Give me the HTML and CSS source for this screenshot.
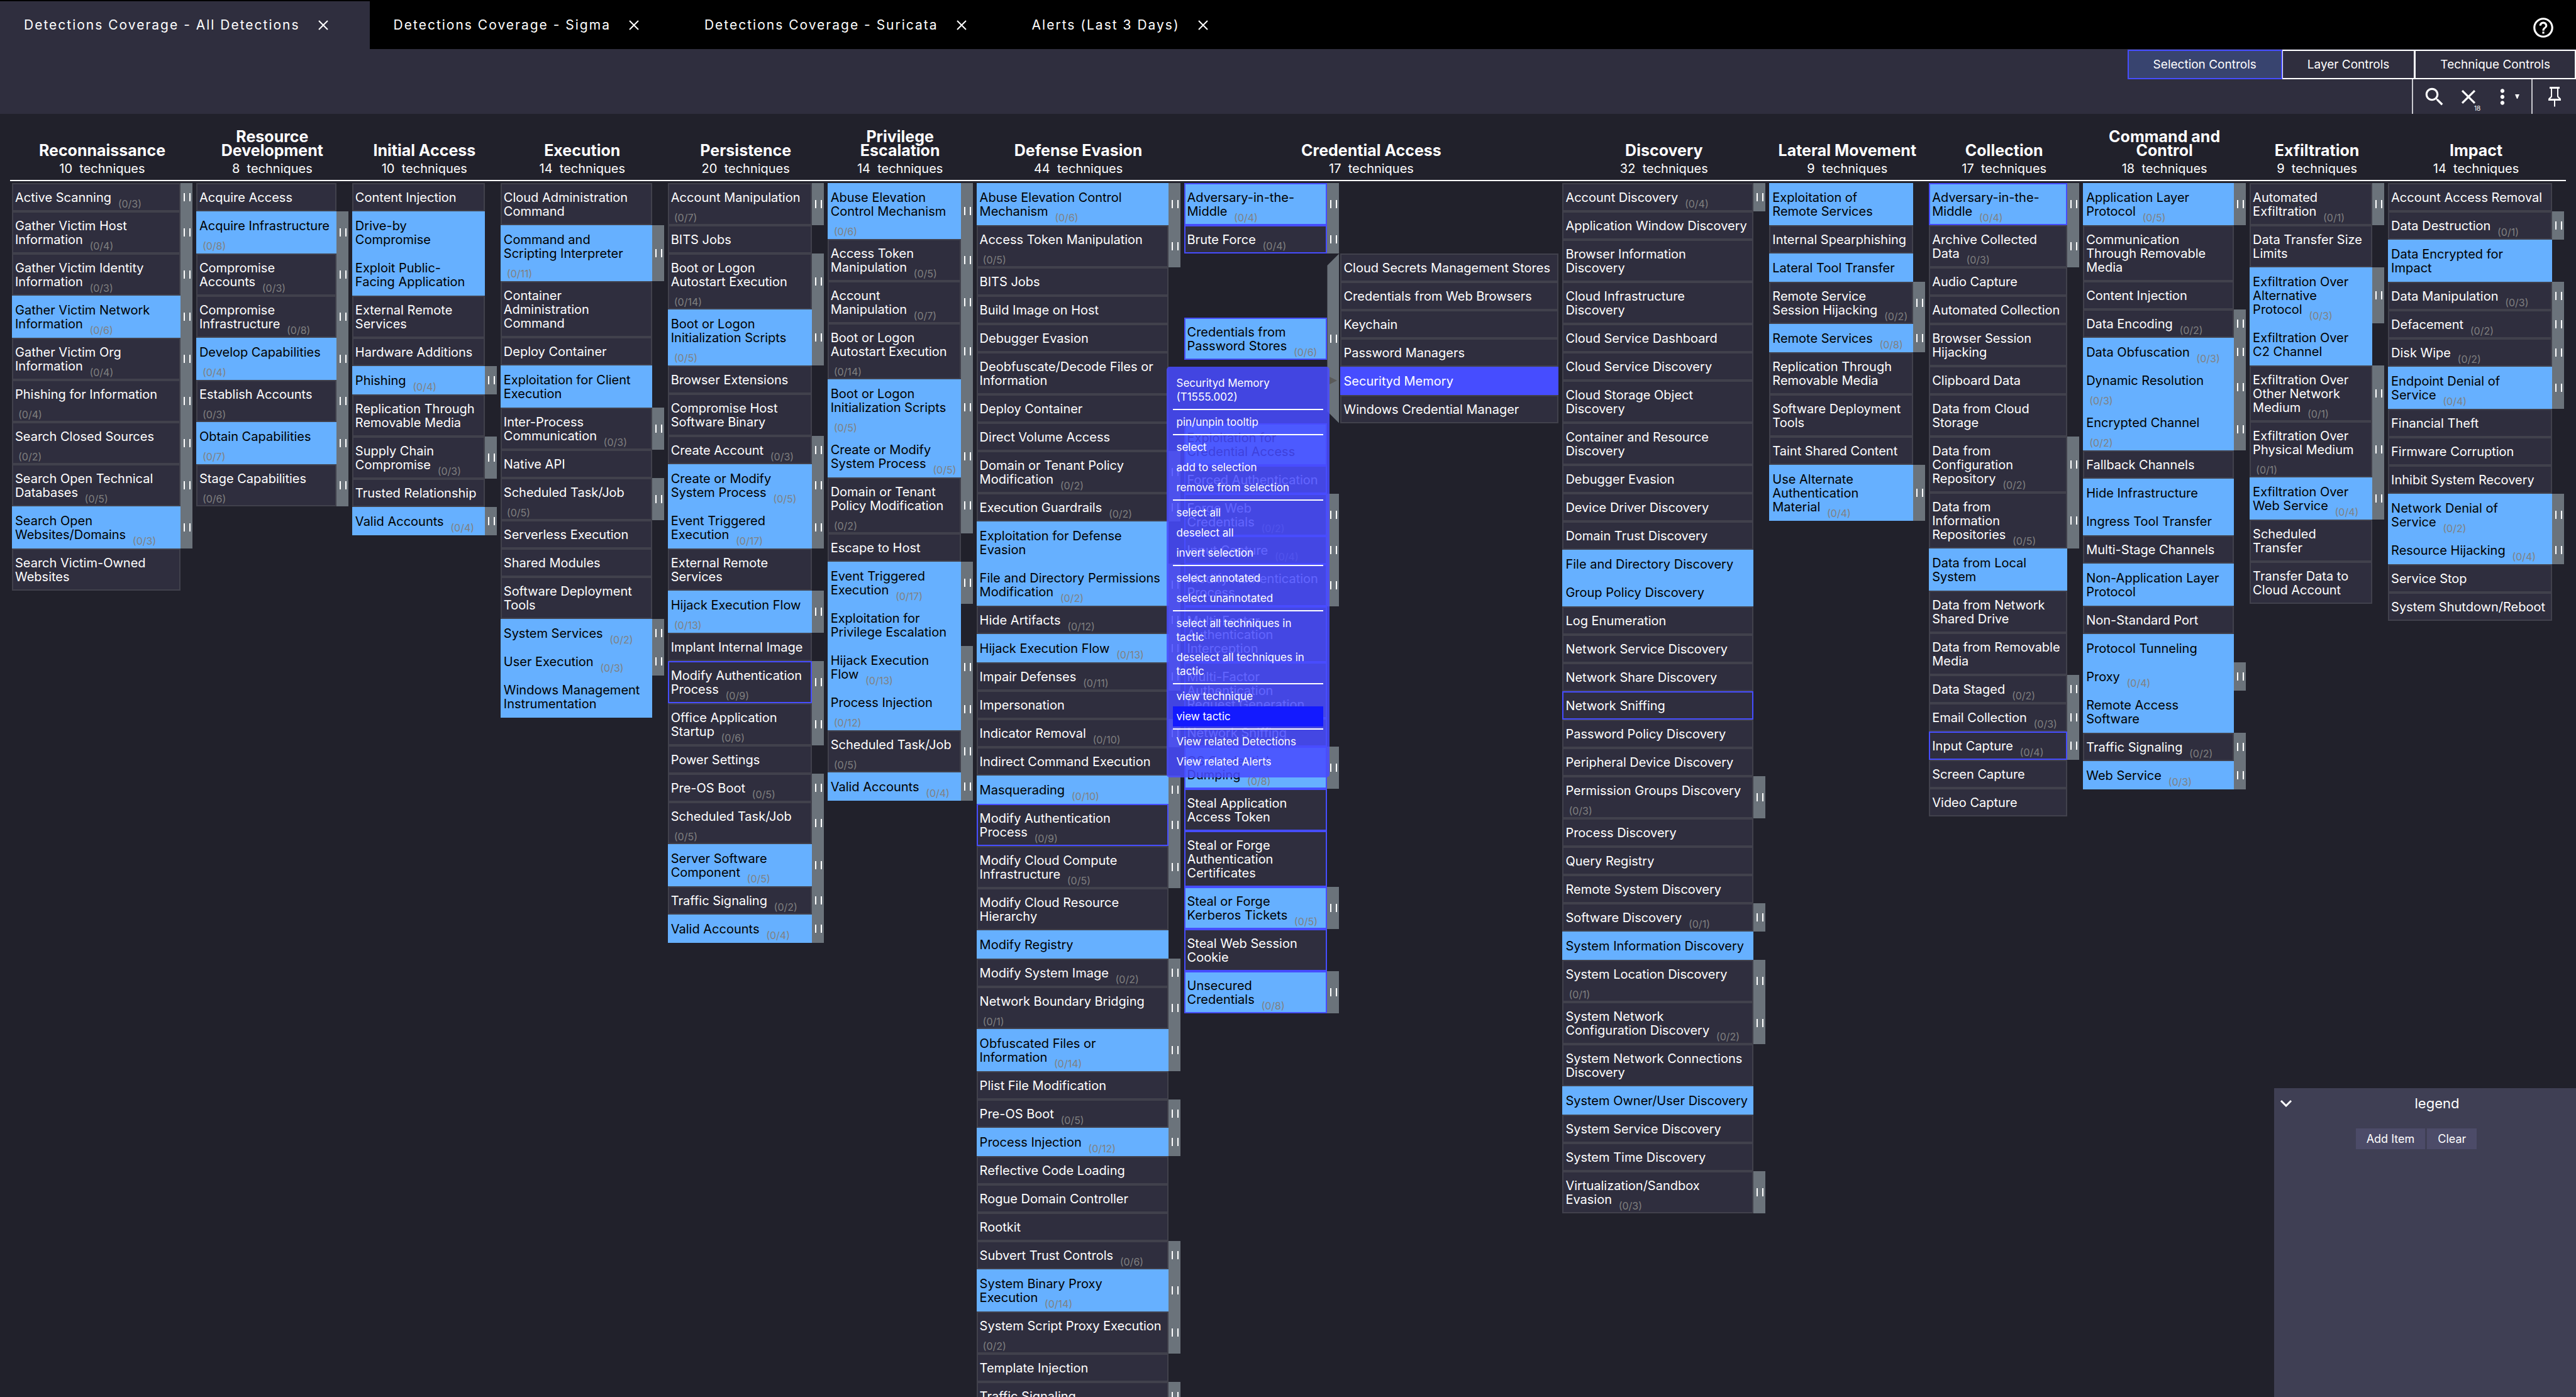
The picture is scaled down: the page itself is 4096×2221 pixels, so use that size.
FILE: index.html
```html
<!DOCTYPE html>
<html lang="en">
<head>
<meta charset="utf-8">
<title>Detections Coverage</title>
<link rel="stylesheet" href="styles.css">
</head>
<body>
<nav class="tabs">
  <div class="tab tab-active"><button class="tab-name">Detections Coverage - All Detections</button><button class="tab-close" aria-label="Close"><svg viewBox="0 0 16 16"><path d="M1 1l14 14M15 1L1 15"/></svg></button></div>
  <div class="tab"><button class="tab-name">Detections Coverage - Sigma</button><button class="tab-close" aria-label="Close"><svg viewBox="0 0 16 16"><path d="M1 1l14 14M15 1L1 15"/></svg></button></div>
  <div class="tab"><button class="tab-name">Detections Coverage - Suricata</button><button class="tab-close" aria-label="Close"><svg viewBox="0 0 16 16"><path d="M1 1l14 14M15 1L1 15"/></svg></button></div>
  <div class="tab"><button class="tab-name">Alerts (Last 3 Days)</button><button class="tab-close" aria-label="Close"><svg viewBox="0 0 16 16"><path d="M1 1l14 14M15 1L1 15"/></svg></button></div>
  <button class="help" aria-label="Help"><svg class="icon" viewBox="0 0 24 24"><path d="M11 18h2v-2h-2v2zm1-16C6.480 2 2 6.480 2 12s4.480 10 10 10 10-4.480 10-10S17.520 2 12 2zm0 18c-4.410 0-8-3.590-8-8s3.590-8 8-8 8 3.590 8 8-3.590 8-8 8zm0-14c-2.210 0-4 1.790-4 4h2c0-1.100.9-2 2-2s2 .9 2 2c0 2-3 1.750-3 5h2c0-2.250 3-2.500 3-5 0-2.210-1.790-4-4-4z"/></svg></button>
</nav>
<header class="controls">
  <div class="modes">
    <button class="mode mode-on">Selection Controls</button><button class="mode">Layer Controls</button><button class="mode">Technique Controls</button>
  </div>
  <div class="tools">
    <div class="tool-group tool-main">
      <button class="tool" aria-label="Search"><svg class="icon" viewBox="0 0 24 24"><path d="M15.500 14h-.79l-.28-.27C15.410 12.590 16 11.110 16 9.500 16 5.910 13.090 3 9.500 3S3 5.910 3 9.500 5.910 16 9.500 16c1.610 0 3.090-.59 4.230-1.570l.27.28v.79l5 4.990L20.490 19l-4.990-5zm-6 0C7.010 14 5 11.990 5 9.500S7.010 5 9.500 5 14 7.010 14 9.500 11.990 14 9.500 14z"/></svg></button>
      <button class="tool" aria-label="Deselect"><svg class="icon" viewBox="0 0 24 24"><path d="M19 6.410L17.590 5 12 10.590 6.410 5 5 6.410 10.590 12 5 17.590 6.410 19 12 13.410 17.590 19 19 17.590 13.410 12z"/></svg><span class="tool-count">18</span></button>
      <button class="tool tool-more" aria-label="More"><svg class="icon" viewBox="0 0 24 24"><path d="M12 8c1.100 0 2-.9 2-2s-.9-2-2-2-2 .9-2 2 .9 2 2 2zm0 2c-1.100 0-2 .9-2 2s.9 2 2 2 2-.9 2-2-.9-2-2-2zm0 6c-1.100 0-2 .9-2 2s.9 2 2 2 2-.9 2-2-.9-2-2-2z"/></svg><svg class="caret" viewBox="0 0 7 7"><path d="M0 0h7L4 7H3z"/></svg></button>
    </div>
    <div class="tool-group">
      <button class="tool tool-pin" aria-label="Pin"><svg class="pin" viewBox="0 0 20 32"><path fill-rule="evenodd" d="M2 0h16v3h-2v12l4 4v3h-9v9l-1 1-1-1v-9H0v-3l4-4V3H2zM6 3v13l-3 3h14l-3-3V3z"/></svg></button>
    </div>
  </div>
</header>
<main class="matrix">
<section class="tactic">
  <header><h2>Reconnaissance</h2><p>10&nbsp; techniques</p></header>
  <ul>
    <li><p>Active Scanning <sub>(0/3)</sub></p><button></button></li>
    <li><p>Gather Victim Host Information <sub>(0/4)</sub></p><button></button></li>
    <li><p>Gather Victim Identity Information <sub>(0/3)</sub></p><button></button></li>
    <li class="hit"><p>Gather Victim Network Information <sub>(0/6)</sub></p><button></button></li>
    <li><p>Gather Victim Org<br>Information <sub>(0/4)</sub></p><button></button></li>
    <li><p>Phishing for Information <sub>(0/4)</sub></p><button></button></li>
    <li><p>Search Closed Sources <br><sub>(0/2)</sub></p><button></button></li>
    <li><p>Search Open Technical Databases <sub>(0/5)</sub></p><button></button></li>
    <li class="hit"><p>Search Open<br>Websites/Domains <sub>(0/3)</sub></p><button></button></li>
    <li><p>Search Victim-Owned<br>Websites</p></li>
  </ul>
</section>
<section class="tactic">
  <header><h2>Resource Development</h2><p>8&nbsp; techniques</p></header>
  <ul>
    <li><p>Acquire Access</p></li>
    <li class="hit"><p>Acquire Infrastructure <sub>(0/8)</sub></p><button></button></li>
    <li><p>Compromise<br>Accounts <sub>(0/3)</sub></p><button></button></li>
    <li><p>Compromise Infrastructure <sub>(0/8)</sub></p><button></button></li>
    <li class="hit"><p>Develop Capabilities <br><sub>(0/4)</sub></p><button></button></li>
    <li><p>Establish Accounts <br><sub>(0/3)</sub></p><button></button></li>
    <li class="hit"><p>Obtain Capabilities <br><sub>(0/7)</sub></p><button></button></li>
    <li><p>Stage Capabilities <br><sub>(0/6)</sub></p><button></button></li>
  </ul>
</section>
<section class="tactic">
  <header><h2>Initial Access</h2><p>10&nbsp; techniques</p></header>
  <ul>
    <li><p>Content Injection</p></li>
    <li class="hit"><p>Drive-by<br>Compromise</p></li>
    <li class="hit"><p>Exploit Public-<br>Facing Application</p></li>
    <li><p>External Remote Services</p></li>
    <li><p>Hardware Additions</p></li>
    <li class="hit"><p>Phishing <sub>(0/4)</sub></p><button></button></li>
    <li><p>Replication Through Removable Media</p></li>
    <li><p>Supply Chain Compromise <sub>(0/3)</sub></p><button></button></li>
    <li><p>Trusted Relationship</p></li>
    <li class="hit"><p>Valid Accounts <sub>(0/4)</sub></p><button></button></li>
  </ul>
</section>
<section class="tactic">
  <header><h2>Execution</h2><p>14&nbsp; techniques</p></header>
  <ul>
    <li><p>Cloud Administration Command</p></li>
    <li class="hit"><p>Command and<br>Scripting Interpreter <sub>(0/11)</sub></p><button></button></li>
    <li><p>Container<br>Administration<br>Command</p></li>
    <li><p>Deploy Container</p></li>
    <li class="hit"><p>Exploitation for Client Execution</p></li>
    <li><p>Inter-Process<br>Communication <sub>(0/3)</sub></p><button></button></li>
    <li><p>Native API</p></li>
    <li><p>Scheduled Task/Job <br><sub>(0/5)</sub></p><button></button></li>
    <li><p>Serverless Execution</p></li>
    <li><p>Shared Modules</p></li>
    <li><p>Software Deployment Tools</p></li>
    <li class="hit"><p>System Services <sub>(0/2)</sub></p><button></button></li>
    <li class="hit"><p>User Execution <sub>(0/3)</sub></p><button></button></li>
    <li class="hit"><p>Windows Management Instrumentation</p></li>
  </ul>
</section>
<section class="tactic">
  <header><h2>Persistence</h2><p>20&nbsp; techniques</p></header>
  <ul>
    <li><p>Account Manipulation <sub>(0/7)</sub></p><button></button></li>
    <li><p>BITS Jobs</p></li>
    <li><p>Boot or Logon<br>Autostart Execution <sub>(0/14)</sub></p><button></button></li>
    <li class="hit"><p>Boot or Logon<br>Initialization Scripts <sub>(0/5)</sub></p><button></button></li>
    <li><p>Browser Extensions</p></li>
    <li><p>Compromise Host Software Binary</p></li>
    <li><p>Create Account <sub>(0/3)</sub></p><button></button></li>
    <li class="hit"><p>Create or Modify System Process <sub>(0/5)</sub></p><button></button></li>
    <li class="hit"><p>Event Triggered Execution <sub>(0/17)</sub></p><button></button></li>
    <li><p>External Remote Services</p></li>
    <li class="hit"><p>Hijack Execution Flow <sub>(0/13)</sub></p><button></button></li>
    <li><p>Implant Internal Image</p></li>
    <li class="linked"><p>Modify Authentication Process <sub>(0/9)</sub></p><button></button></li>
    <li><p>Office Application Startup <sub>(0/6)</sub></p><button></button></li>
    <li><p>Power Settings</p></li>
    <li><p>Pre-OS Boot <sub>(0/5)</sub></p><button></button></li>
    <li><p>Scheduled Task/Job <br><sub>(0/5)</sub></p><button></button></li>
    <li class="hit"><p>Server Software Component <sub>(0/5)</sub></p><button></button></li>
    <li><p>Traffic Signaling <sub>(0/2)</sub></p><button></button></li>
    <li class="hit"><p>Valid Accounts <sub>(0/4)</sub></p><button></button></li>
  </ul>
</section>
<section class="tactic">
  <header><h2>Privilege<br>Escalation</h2><p>14&nbsp; techniques</p></header>
  <ul>
    <li class="hit"><p>Abuse Elevation Control Mechanism <sub>(0/6)</sub></p><button></button></li>
    <li><p>Access Token Manipulation <sub>(0/5)</sub></p><button></button></li>
    <li><p>Account<br>Manipulation <sub>(0/7)</sub></p><button></button></li>
    <li><p>Boot or Logon<br>Autostart Execution <sub>(0/14)</sub></p><button></button></li>
    <li class="hit"><p>Boot or Logon<br>Initialization Scripts <sub>(0/5)</sub></p><button></button></li>
    <li class="hit"><p>Create or Modify System Process <sub>(0/5)</sub></p><button></button></li>
    <li><p>Domain or Tenant Policy Modification <sub>(0/2)</sub></p><button></button></li>
    <li><p>Escape to Host</p></li>
    <li class="hit"><p>Event Triggered Execution <sub>(0/17)</sub></p><button></button></li>
    <li class="hit"><p>Exploitation for Privilege Escalation</p></li>
    <li class="hit"><p>Hijack Execution<br>Flow <sub>(0/13)</sub></p><button></button></li>
    <li class="hit"><p>Process Injection <br><sub>(0/12)</sub></p><button></button></li>
    <li><p>Scheduled Task/Job <sub>(0/5)</sub></p><button></button></li>
    <li class="hit"><p>Valid Accounts <sub>(0/4)</sub></p><button></button></li>
  </ul>
</section>
<section class="tactic">
  <header><h2>Defense Evasion</h2><p>44&nbsp; techniques</p></header>
  <ul>
    <li class="hit"><p>Abuse Elevation Control Mechanism <sub>(0/6)</sub></p><button></button></li>
    <li><p>Access Token Manipulation <br><sub>(0/5)</sub></p><button></button></li>
    <li><p>BITS Jobs</p></li>
    <li><p>Build Image on Host</p></li>
    <li><p>Debugger Evasion</p></li>
    <li><p>Deobfuscate/Decode Files or Information</p></li>
    <li><p>Deploy Container</p></li>
    <li><p>Direct Volume Access</p></li>
    <li><p>Domain or Tenant Policy Modification <sub>(0/2)</sub></p><button></button></li>
    <li><p>Execution Guardrails <sub>(0/2)</sub></p><button></button></li>
    <li class="hit"><p>Exploitation for Defense<br>Evasion</p></li>
    <li class="hit"><p>File and Directory Permissions Modification <sub>(0/2)</sub></p><button></button></li>
    <li><p>Hide Artifacts <sub>(0/12)</sub></p><button></button></li>
    <li class="hit"><p>Hijack Execution Flow <sub>(0/13)</sub></p><button></button></li>
    <li><p>Impair Defenses <sub>(0/11)</sub></p><button></button></li>
    <li><p>Impersonation</p></li>
    <li><p>Indicator Removal <sub>(0/10)</sub></p><button></button></li>
    <li><p>Indirect Command Execution</p></li>
    <li class="hit"><p>Masquerading <sub>(0/10)</sub></p><button></button></li>
    <li class="linked"><p>Modify Authentication<br>Process <sub>(0/9)</sub></p><button></button></li>
    <li><p>Modify Cloud Compute Infrastructure <sub>(0/5)</sub></p><button></button></li>
    <li><p>Modify Cloud Resource Hierarchy</p></li>
    <li class="hit"><p>Modify Registry</p></li>
    <li><p>Modify System Image <sub>(0/2)</sub></p><button></button></li>
    <li><p>Network Boundary Bridging <br><sub>(0/1)</sub></p><button></button></li>
    <li class="hit"><p>Obfuscated Files or<br>Information <sub>(0/14)</sub></p><button></button></li>
    <li><p>Plist File Modification</p></li>
    <li><p>Pre-OS Boot <sub>(0/5)</sub></p><button></button></li>
    <li class="hit"><p>Process Injection <sub>(0/12)</sub></p><button></button></li>
    <li><p>Reflective Code Loading</p></li>
    <li><p>Rogue Domain Controller</p></li>
    <li><p>Rootkit</p></li>
    <li><p>Subvert Trust Controls <sub>(0/6)</sub></p><button></button></li>
    <li class="hit"><p>System Binary Proxy<br>Execution <sub>(0/14)</sub></p><button></button></li>
    <li><p>System Script Proxy Execution <sub>(0/2)</sub></p><button></button></li>
    <li><p>Template Injection</p></li>
    <li><p>Traffic Signaling <sub>(0/2)</sub></p><button></button></li>
  </ul>
</section>
<section class="tactic tactic-open">
  <header><h2>Credential Access</h2><p>17&nbsp; techniques</p></header>
  <ul>
    <li class="hit linked"><p>Adversary-in-the-Middle <sub>(0/4)</sub></p><button></button></li>
    <li class="linked"><p>Brute Force <sub>(0/4)</sub></p><button></button></li>
    <li class="hit linked expanded"><p>Credentials from Password Stores <sub>(0/6)</sub></p><button></button>
      <ol class="subs">
        <li><p>Cloud Secrets Management Stores</p></li>
        <li><p>Credentials from Web Browsers</p></li>
        <li><p>Keychain</p></li>
        <li><p>Password Managers</p></li>
        <li class="selected"><p>Securityd Memory</p>
          <div class="menu">
            <h3>Securityd Memory (T1555.002)</h3>
            <hr>
            <button>pin/unpin tooltip</button>
            <hr>
            <button>select</button>
            <button>add to selection</button>
            <button>remove from selection</button>
            <hr>
            <button>select all</button>
            <button>deselect all</button>
            <button>invert selection</button>
            <hr>
            <button>select annotated</button>
            <button>select unannotated</button>
            <hr>
            <button>select all techniques in tactic</button>
            <button>deselect all techniques in tactic</button>
            <hr>
            <button>view technique</button>
            <button class="hover">view tactic</button>
            <hr>
            <button>View related Detections</button>
            <button>View related Alerts</button>
          </div>
        </li>
        <li><p>Windows Credential Manager</p></li>
      </ol>
    </li>
    <li class="hit linked"><p>Exploitation for Credential Access</p></li>
    <li class="linked"><p>Forced Authentication</p></li>
    <li class="linked"><p>Forge Web<br>Credentials <sub>(0/2)</sub></p><button></button></li>
    <li class="linked"><p>Input Capture <sub>(0/4)</sub></p><button></button></li>
    <li class="linked"><p>Modify Authentication Process <sub>(0/9)</sub></p><button></button></li>
    <li class="linked"><p>Multi-Factor<br>Authentication<br>Interception</p></li>
    <li class="linked"><p>Multi-Factor<br>Authentication<br>Request Generation</p></li>
    <li class="linked"><p>Network Sniffing</p></li>
    <li class="hit linked"><p>OS Credential<br>Dumping <sub>(0/8)</sub></p><button></button></li>
    <li class="linked"><p>Steal Application Access Token</p></li>
    <li class="linked"><p>Steal or Forge<br>Authentication<br>Certificates</p></li>
    <li class="hit linked"><p>Steal or Forge<br>Kerberos Tickets <sub>(0/5)</sub></p><button></button></li>
    <li class="linked"><p>Steal Web Session Cookie</p></li>
    <li class="hit linked"><p>Unsecured<br>Credentials <sub>(0/8)</sub></p><button></button></li>
  </ul>
</section>
<section class="tactic">
  <header><h2>Discovery</h2><p>32&nbsp; techniques</p></header>
  <ul>
    <li><p>Account Discovery <sub>(0/4)</sub></p><button></button></li>
    <li><p>Application Window Discovery</p></li>
    <li><p>Browser Information<br>Discovery</p></li>
    <li><p>Cloud Infrastructure<br>Discovery</p></li>
    <li><p>Cloud Service Dashboard</p></li>
    <li><p>Cloud Service Discovery</p></li>
    <li><p>Cloud Storage Object<br>Discovery</p></li>
    <li><p>Container and Resource Discovery</p></li>
    <li><p>Debugger Evasion</p></li>
    <li><p>Device Driver Discovery</p></li>
    <li><p>Domain Trust Discovery</p></li>
    <li class="hit"><p>File and Directory Discovery</p></li>
    <li class="hit"><p>Group Policy Discovery</p></li>
    <li><p>Log Enumeration</p></li>
    <li><p>Network Service Discovery</p></li>
    <li><p>Network Share Discovery</p></li>
    <li class="linked"><p>Network Sniffing</p></li>
    <li><p>Password Policy Discovery</p></li>
    <li><p>Peripheral Device Discovery</p></li>
    <li><p>Permission Groups Discovery <sub>(0/3)</sub></p><button></button></li>
    <li><p>Process Discovery</p></li>
    <li><p>Query Registry</p></li>
    <li><p>Remote System Discovery</p></li>
    <li><p>Software Discovery <sub>(0/1)</sub></p><button></button></li>
    <li class="hit"><p>System Information Discovery</p></li>
    <li><p>System Location Discovery <br><sub>(0/1)</sub></p><button></button></li>
    <li><p>System Network<br>Configuration Discovery <sub>(0/2)</sub></p><button></button></li>
    <li><p>System Network Connections Discovery</p></li>
    <li class="hit"><p>System Owner/User Discovery</p></li>
    <li><p>System Service Discovery</p></li>
    <li><p>System Time Discovery</p></li>
    <li><p>Virtualization/Sandbox<br>Evasion <sub>(0/3)</sub></p><button></button></li>
  </ul>
</section>
<section class="tactic">
  <header><h2>Lateral Movement</h2><p>9&nbsp; techniques</p></header>
  <ul>
    <li class="hit"><p>Exploitation of<br>Remote Services</p></li>
    <li><p>Internal Spearphishing</p></li>
    <li class="hit"><p>Lateral Tool Transfer</p></li>
    <li><p>Remote Service<br>Session Hijacking <sub>(0/2)</sub></p><button></button></li>
    <li class="hit"><p>Remote Services <sub>(0/8)</sub></p><button></button></li>
    <li><p>Replication Through Removable Media</p></li>
    <li><p>Software Deployment Tools</p></li>
    <li><p>Taint Shared Content</p></li>
    <li class="hit"><p>Use Alternate<br>Authentication<br>Material <sub>(0/4)</sub></p><button></button></li>
  </ul>
</section>
<section class="tactic">
  <header><h2>Collection</h2><p>17&nbsp; techniques</p></header>
  <ul>
    <li class="hit linked"><p>Adversary-in-the-Middle <sub>(0/4)</sub></p><button></button></li>
    <li><p>Archive Collected<br>Data <sub>(0/3)</sub></p><button></button></li>
    <li><p>Audio Capture</p></li>
    <li><p>Automated Collection</p></li>
    <li><p>Browser Session Hijacking</p></li>
    <li><p>Clipboard Data</p></li>
    <li><p>Data from Cloud Storage</p></li>
    <li><p>Data from<br>Configuration<br>Repository <sub>(0/2)</sub></p><button></button></li>
    <li><p>Data from<br>Information<br>Repositories <sub>(0/5)</sub></p><button></button></li>
    <li class="hit"><p>Data from Local<br>System</p></li>
    <li><p>Data from Network Shared Drive</p></li>
    <li><p>Data from Removable Media</p></li>
    <li><p>Data Staged <sub>(0/2)</sub></p><button></button></li>
    <li><p>Email Collection <sub>(0/3)</sub></p><button></button></li>
    <li class="linked"><p>Input Capture <sub>(0/4)</sub></p><button></button></li>
    <li><p>Screen Capture</p></li>
    <li><p>Video Capture</p></li>
  </ul>
</section>
<section class="tactic">
  <header><h2>Command and<br>Control</h2><p>18&nbsp; techniques</p></header>
  <ul>
    <li class="hit"><p>Application Layer<br>Protocol <sub>(0/5)</sub></p><button></button></li>
    <li><p>Communication<br>Through Removable<br>Media</p></li>
    <li><p>Content Injection</p></li>
    <li><p>Data Encoding <sub>(0/2)</sub></p><button></button></li>
    <li class="hit"><p>Data Obfuscation <sub>(0/3)</sub></p><button></button></li>
    <li class="hit"><p>Dynamic Resolution <br><sub>(0/3)</sub></p><button></button></li>
    <li class="hit"><p>Encrypted Channel <br><sub>(0/2)</sub></p><button></button></li>
    <li><p>Fallback Channels</p></li>
    <li class="hit"><p>Hide Infrastructure</p></li>
    <li class="hit"><p>Ingress Tool Transfer</p></li>
    <li><p>Multi-Stage Channels</p></li>
    <li class="hit"><p>Non-Application Layer Protocol</p></li>
    <li><p>Non-Standard Port</p></li>
    <li class="hit"><p>Protocol Tunneling</p></li>
    <li class="hit"><p>Proxy <sub>(0/4)</sub></p><button></button></li>
    <li class="hit"><p>Remote Access<br>Software</p></li>
    <li><p>Traffic Signaling <sub>(0/2)</sub></p><button></button></li>
    <li class="hit"><p>Web Service <sub>(0/3)</sub></p><button></button></li>
  </ul>
</section>
<section class="tactic">
  <header><h2>Exfiltration</h2><p>9&nbsp; techniques</p></header>
  <ul>
    <li><p>Automated Exfiltration <sub>(0/1)</sub></p><button></button></li>
    <li><p>Data Transfer Size Limits</p></li>
    <li class="hit"><p>Exfiltration Over<br>Alternative<br>Protocol <sub>(0/3)</sub></p><button></button></li>
    <li class="hit"><p>Exfiltration Over<br>C2 Channel</p></li>
    <li><p>Exfiltration Over<br>Other Network<br>Medium <sub>(0/1)</sub></p><button></button></li>
    <li><p>Exfiltration Over<br>Physical Medium <br><sub>(0/1)</sub></p><button></button></li>
    <li class="hit"><p>Exfiltration Over<br>Web Service <sub>(0/4)</sub></p><button></button></li>
    <li><p>Scheduled<br>Transfer</p></li>
    <li><p>Transfer Data to<br>Cloud Account</p></li>
  </ul>
</section>
<section class="tactic">
  <header><h2>Impact</h2><p>14&nbsp; techniques</p></header>
  <ul>
    <li><p>Account Access Removal</p></li>
    <li><p>Data Destruction <sub>(0/1)</sub></p><button></button></li>
    <li class="hit"><p>Data Encrypted for<br>Impact</p></li>
    <li><p>Data Manipulation <sub>(0/3)</sub></p><button></button></li>
    <li><p>Defacement <sub>(0/2)</sub></p><button></button></li>
    <li><p>Disk Wipe <sub>(0/2)</sub></p><button></button></li>
    <li class="hit"><p>Endpoint Denial of<br>Service <sub>(0/4)</sub></p><button></button></li>
    <li><p>Financial Theft</p></li>
    <li><p>Firmware Corruption</p></li>
    <li><p>Inhibit System Recovery</p></li>
    <li class="hit"><p>Network Denial of<br>Service <sub>(0/2)</sub></p><button></button></li>
    <li class="hit"><p>Resource Hijacking <sub>(0/4)</sub></p><button></button></li>
    <li><p>Service Stop</p></li>
    <li><p>System Shutdown/Reboot</p></li>
  </ul>
</section>
</main>
<aside class="legend">
  <div class="legend-head"><button class="legend-fold" aria-label="Collapse"><svg viewBox="0 0 20 12"><path d="M2 2l8 8 8-8"/></svg></button><h2>legend</h2></div>
  <div class="legend-actions"><button>Add Item</button><button>Clear</button></div>
</aside>
</body>
</html>
```

FILE: styles.css
```css
* { box-sizing: border-box; }

body {
  margin: 0;
  height: 100vh;
  overflow: hidden;
  display: flex;
  flex-direction: column;
  background: #21212b;
  color: #fff;
  font: 20px/22px Inter, "Liberation Sans", sans-serif;
}

h2, h3, p, ul, ol { margin: 0; padding: 0; list-style: none; }

button {
  margin: 0;
  padding: 0;
  border: 0;
  background: none;
  color: inherit;
  font: inherit;
  cursor: pointer;
}

svg { display: block; fill: #fff; }
.icon { width: 38px; height: 38px; }

/* Layer tabs */
.tabs {
  flex: none;
  display: flex;
  height: 78px;
  padding-top: 2px;
  background: #000;
}
.tab {
  display: flex;
  align-items: center;
  gap: 29px;
  padding: 0 66px 0 38px;
}
.tab-active { background: #2f2e3e; }
.tab-name { font-size: 21px; letter-spacing: 2px; }
.tab-close svg { width: 16px; height: 16px; fill: none; stroke: #fff; stroke-width: 2; }
.help { margin-left: auto; padding: 8px 33px 0 0; }

/* Controls */
.controls { flex: none; background: #2f2e3e; }
.modes { display: flex; justify-content: flex-end; padding-top: 1px; }
.mode {
  height: 47px;
  padding: 0 39px;
  border: 2px solid #fff;
  font-size: 19px;
}
.mode + .mode { border-left-width: 1px; }
.mode-on { background: #38446f; border-color: #464dff; }
.tools { display: flex; justify-content: flex-end; height: 55px; }
.tool-group { display: flex; border-left: 2px solid #c9c9cf; }
.tool-main { padding-left: 7px; }
.tool { position: relative; display: flex; align-items: center; width: 54px; padding-left: 8px; }
.tool-more { width: 73px; gap: 1px; }
.tool-pin { width: 69px; padding: 0; justify-content: center; }
.tool-count { position: absolute; left: 36px; top: 41px; font-size: 10px; line-height: 10px; }
.caret { width: 7px; height: 7px; }
.pin { width: 20px; height: 32px; }

/* Technique matrix */
.matrix {
  flex: 1;
  min-height: 0;
  overflow: hidden;
  display: grid;
  grid-template-columns: 293fr 248fr 236fr 266fr 254fr 237fr 330fr 602fr 329fr 254fr 245fr 265fr 220fr 286fr;
  align-items: start;
  padding: 0 16px;
}
.tactic { min-width: 0; }
.tactic > header {
  display: flex;
  flex-direction: column;
  justify-content: flex-end;
  gap: 7px;
  height: 107px;
  padding-bottom: 7px;
  border-bottom: 2px solid #fff;
  text-align: center;
}
.tactic h2 { font-size: 25px; line-height: 22px; font-weight: 700; }
.tactic > ul { padding: 3px 3px 0; }
.tactic > ul > li { display: grid; grid-template-columns: minmax(0, 1fr) 19px; }
.tactic-open > ul > li { grid-template-columns: minmax(0, 228fr) 19px minmax(0, 349fr); }

.tactic li > p {
  padding: 10px 0 9px 3px;
  border: 2px solid #41414c;
  background: #2f2e3e;
}
.tactic .hit > p { background: #66b0ff; border-color: #66b0ff; color: #000; }
.tactic .linked > p { border-color: #464dff; }
.tactic .selected > p { background: #464dff; border-color: #464dff; }

sub {
  padding-left: 5px;
  color: #808080;
  font-size: 16px;
  line-height: 0;
  vertical-align: -9px;
}

.tactic li > button {
  display: grid;
  place-content: center;
  padding-left: 2px;
  background: #6b737b;
}
.tactic li > button::before {
  content: "";
  width: 7px;
  height: 13px;
  border: solid #fff;
  border-width: 0 2px;
}

.expanded > p { align-self: center; }
.tactic .expanded > button {
  clip-path: polygon(100% 0, 100% 100%, 0 calc(100% - 19px), 0 19px);
}
.subs { padding-left: 2px; }
.subs li { position: relative; }
.subs li > p { color: #fff; }
.tactic .subs li:not(.selected) > p { background: #2f2e3e; border-color: #41414c; }

/* Context menu of the selected technique */
.menu {
  position: absolute;
  z-index: 2;
  top: 0;
  right: calc(100% + 17px);
  width: 259px;
  padding: 10px 10px 9px;
  border-radius: 5px;
  background: rgba(72, 76, 255, 0.86);
  font-size: 17px;
}
.menu::after {
  content: "";
  position: absolute;
  left: 100%;
  top: 16px;
  border: solid transparent;
  border-width: 6px 0 6px 12px;
  border-left-color: #5a5a5a;
}
.menu h3 { padding: 5px; font: inherit; }
.menu button { display: block; width: 100%; padding: 5px; text-align: left; }
.menu .hover { background: #131aff; }
.menu hr { height: 2px; margin: 3px 0; border: 0; background: #fff; }

/* Legend */
.legend {
  position: fixed;
  right: 0;
  bottom: 0;
  width: 480px;
  height: 491px;
  background: #3f3f54;
}
.legend-head { display: flex; align-items: center; height: 48px; }
.legend-fold { width: 38px; padding-left: 9px; }
.legend-fold svg { width: 20px; height: 12px; fill: none; stroke: #fff; stroke-width: 3; }
.legend h2 { flex: 1; font-size: 22px; font-weight: 400; text-align: center; }
.legend-actions { display: flex; justify-content: center; gap: 3px; padding: 16px 28px 0 0; }
.legend-actions button { height: 33px; padding: 0 17px; background: #4c4b68; font-size: 18px; }
```
